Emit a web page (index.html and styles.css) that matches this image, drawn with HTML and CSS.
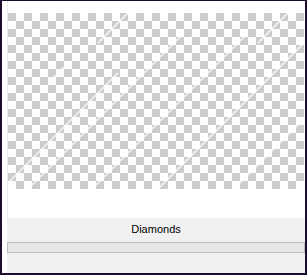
FILE: index.html
```html
<!DOCTYPE html>
<html>
<head>
    <title>Diamonds</title>
    <link rel="stylesheet" href="styles.css">
</head>
<body>
    <div class="window">
        <div class="canvas">
            <svg class="lines" width="296" height="176" viewBox="0 0 296 176">
                <g stroke="#ffffff" stroke-opacity="0.85" stroke-width="1.4" fill="none">
                    <line x1="0" y1="96" x2="70" y2="26"/>
                    <line x1="0" y1="170" x2="110" y2="60"/>
                    <line x1="20" y1="176" x2="176" y2="20"/>
                    <line x1="84" y1="176" x2="240" y2="20"/>
                    <line x1="150" y1="176" x2="296" y2="30"/>
                    <line x1="226" y1="176" x2="296" y2="106"/>
                    <line x1="90" y1="30" x2="120" y2="0"/>
                    <line x1="178" y1="30" x2="208" y2="0"/>
                    <line x1="250" y1="30" x2="280" y2="0"/>
                    <line x1="40" y1="70" x2="60" y2="50"/>
                </g>
            </svg>
        </div>
        <div class="status">
            <div class="status-label">Diamonds</div>
            <div class="progress"></div>
        </div>
    </div>
</body>
</html>
```

FILE: styles.css
```css
body {
    margin: 0;
    font-family: "Liberation Sans", Arial, sans-serif;
}
.window {
    width: 307px;
    height: 275px;
    box-sizing: border-box;
    border: 2px solid #1b0d2e;
    border-top-width: 1px;
    background: #ffffff;
    display: flex;
    flex-direction: column;
}
.canvas {
    height: 217px;
    box-sizing: border-box;
    margin-left: 5px;
    padding: 12px 0 0 0;
    border-left: 1px solid #ececec;
}
.lines {
    display: block;
    background-color: #ffffff;
    background-image:
        conic-gradient(#ffffff 25%, #cccccc 0 50%, #ffffff 0 75%, #cccccc 0);
    background-size: 16px 16px;
}
.status {
    flex: 1;
    margin: 0 0 0 5px;
    background: #f0f0f0;
    display: flex;
    flex-direction: column;
}
.status-label {
    font-size: 11px;
    color: #000;
    text-align: center;
    padding-top: 6px;
    height: 17px;
    box-sizing: border-box;
    line-height: 11px;
}
.progress {
    margin-top: 7px;
    height: 11px;
    box-sizing: border-box;
    border: 1px solid #bcbcbc;
    background: #e6e6e6;
}
```
